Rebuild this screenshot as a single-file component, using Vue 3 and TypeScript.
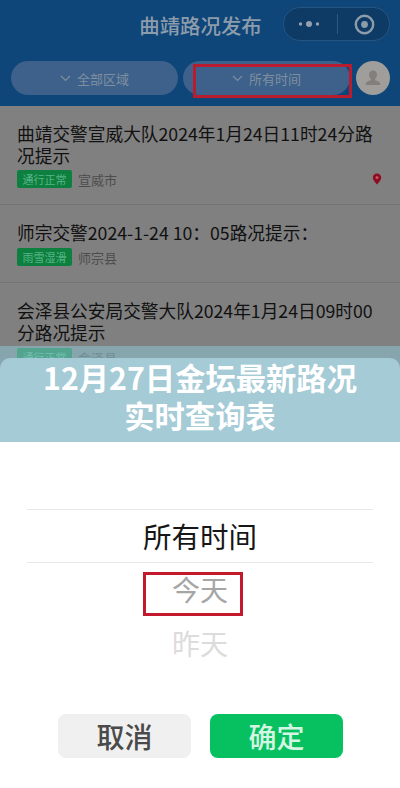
<template>
  <div class="page">
    <section class="screen">
      <header class="top">
        <div class="nav">
          <span class="nav__title">曲靖路况发布</span>
          <div class="capsule">
            <svg class="capsule__dots" width="22" height="8" viewBox="0 0 22 8">
              <circle cx="2.5" cy="4" r="1.7" />
              <circle cx="11" cy="4" r="3" />
              <circle cx="19.5" cy="4" r="1.7" />
            </svg>
            <span class="capsule__line"></span>
            <svg class="capsule__target" width="21" height="21" viewBox="0 0 21 21">
              <circle cx="10.5" cy="10.5" r="8.7" fill="none" stroke="#8d9ca9" stroke-width="2.4" />
              <circle cx="10.5" cy="10.5" r="3.4" fill="#8d9ca9" />
            </svg>
          </div>
        </div>
        <div class="filters">
          <button v-for="item in filters" :key="item" class="pill">
            <svg width="11" height="7" viewBox="0 0 11 7">
              <path d="M1 1l4.5 4.5L10 1" fill="none" stroke="#7f8f9f" stroke-width="1.1" />
            </svg>
            <span>{{ item }}</span>
          </button>
          <div class="avatar">
            <svg width="18" height="18" viewBox="0 0 18 18">
              <path d="M9 1.500c-2.600 0-4 1.900-4 4.300 0 1.700.7 3.200 1.800 4.100v1.300c-1.900.8-4.600 1.400-5 3.300V16h14.400v-1.500c-.4-1.900-3.100-2.500-5-3.300V9.900c1.100-.9 1.800-2.400 1.800-4.100 0-2.400-1.400-4.300-4-4.300z" fill="#827f7c" />
            </svg>
          </div>
          <span class="mark mark--filter"></span>
        </div>
      </header>

      <article v-for="road in roads" :key="road.title" class="road">
        <h3 class="road__title">{{ road.title }}</h3>
        <div class="road__meta">
          <span class="road__tag">{{ road.tag }}</span>
          <span class="road__place">{{ road.place }}</span>
          <svg v-if="road.pin" class="road__pin" width="10" height="12" viewBox="0 0 10 12">
            <path d="M5 .5C2.500.5.800 2.300.800 4.600c0 2.700 2.600 5 4.200 6.900 1.600-1.900 4.200-4.200 4.200-6.900C9.200 2.300 7.500.5 5 .5z" fill="#8f0d22" />
            <circle cx="5" cy="4.600" r="1.500" fill="#c05a68" />
          </svg>
        </div>
      </article>

      <div class="banner">
        <h1 class="banner__panel">12月27日金坛最新路况<br />实时查询表</h1>
      </div>
    </section>

    <section class="sheet">
      <div class="picker">
        <div class="picker__current">所有时间</div>
        <div class="picker__option">
          今天
          <span class="mark mark--option"></span>
        </div>
        <div class="picker__option picker__option--far">昨天</div>
      </div>
      <div class="actions">
        <button class="action action--cancel">取消</button>
        <button class="action action--ok">确定</button>
      </div>
    </section>
  </div>
</template>

<script setup lang="ts">
interface Road {
  title: string
  tag: string
  place: string
  pin?: boolean
}

const filters: string[] = ['全部区域', '所有时间']

const roads: Road[] = [
  {
    title: '曲靖交警宣威大队2024年1月24日11时24分路况提示',
    tag: '通行正常',
    place: '宣威市',
    pin: true
  },
  {
    title: '师宗交警2024-1-24 10：05路况提示：',
    tag: '雨雪湿滑',
    place: '师宗县'
  },
  {
    title: '会泽县公安局交警大队2024年1月24日09时00分路况提示',
    tag: '通行正常',
    place: '会泽县'
  }
]
</script>

<style scoped>
.page {
  width: 400px;
  height: 788px;
  overflow: hidden;
  background: #fff;
  font-family: 'Noto Sans CJK SC', 'Noto Sans', sans-serif;
}
.screen {
  position: relative;
  height: 442px;
  overflow: hidden;
  background: #808080;
}
.top {
  height: 106px;
  box-sizing: border-box;
  padding: 7px 10px 0 11px;
  background: #0f4679;
}
.nav {
  position: relative;
  display: flex;
  justify-content: flex-end;
  height: 34px;
}
.nav__title {
  position: absolute;
  left: 0;
  right: 0;
  top: 0;
  text-align: center;
  color: #8d9cab;
  font-size: 20.4px;
  line-height: 36px;
  font-weight: 500;
}
.capsule {
  position: relative;
  display: flex;
  align-items: center;
  justify-content: space-between;
  box-sizing: border-box;
  width: 107px;
  height: 34px;
  padding: 0 14px;
  border: 1px solid #27557f;
  border-radius: 17px;
  background: #0e3a66;
}
.capsule__dots {
  fill: #93a1ae;
}
.capsule__line {
  width: 1px;
  height: 20px;
  background: #2c5a84;
}
.filters {
  position: relative;
  display: flex;
  margin-top: 20px;
  gap: 5px;
}
.pill {
  display: flex;
  align-items: center;
  justify-content: center;
  gap: 6px;
  width: 167px;
  height: 34px;
  padding: 0;
  border: none;
  border-radius: 17px;
  background: #3d618a;
  color: #7f8f9f;
  font-family: inherit;
  font-size: 13px;
}
.avatar {
  display: flex;
  align-items: center;
  justify-content: center;
  width: 34px;
  height: 34px;
  margin-left: 1px;
  border-radius: 50%;
  background: #a09e9b;
}
.mark {
  position: absolute;
  box-sizing: border-box;
  border: 3px solid #c21a2c;
}
.mark--filter {
  left: 182px;
  top: 3px;
  width: 159px;
  height: 34px;
  border-color: #b91c2f;
}
.road {
  box-sizing: border-box;
  padding: 16px 17px 16px;
  border-bottom: 1px solid #747474;
}
.road__title {
  margin: 0;
  color: #111;
  font-size: 17.7px;
  line-height: 22px;
  font-weight: 400;
}
.road__meta {
  display: flex;
  align-items: center;
  margin-top: 4px;
  height: 18px;
}
.road + .road {
  padding-top: 17px;
}
.road + .road .road__title {
  margin-top: -1px;
}
.road + .road .road__meta {
  margin-top: 5px;
}
.road__tag {
  width: 55px;
  height: 18px;
  border-radius: 2px;
  background: #0d7f3f;
  color: #58b586;
  text-align: center;
  font-size: 11px;
  line-height: 18px;
}
.road__place {
  margin-left: 6px;
  color: #4c4c4c;
  font-size: 13px;
}
.road__pin {
  margin-left: auto;
  margin-right: 1px;
}
.banner {
  position: absolute;
  left: 0;
  right: 0;
  top: 346px;
  bottom: 0;
  padding-top: 12px;
  box-sizing: border-box;
  background: rgba(140, 195, 210, 0.55);
}
.banner__panel {
  height: 84px;
  margin: 0;
  border-radius: 10px 10px 0 0;
  background: #a5cbd6;
  color: #fff;
  text-align: center;
  font-size: 30.3px;
  line-height: 38px;
  font-weight: 700;
}
.sheet {
  padding: 67px 27px 0;
}
.picker {
  display: flex;
  flex-direction: column;
  align-items: center;
}
.picker__current {
  align-self: stretch;
  height: 52px;
  border-top: 1px solid #e8e8e8;
  border-bottom: 1px solid #e8e8e8;
  text-align: center;
  color: #161616;
  font-size: 28.5px;
  line-height: 52px;
}
.picker__option {
  position: relative;
  height: 54px;
  margin-top: 1px;
  color: #a6a6a6;
  font-size: 28px;
  line-height: 50px;
}
.picker__option--far {
  margin-top: 0;
  color: #dcdcdc;
}
.mark--option {
  left: -29px;
  top: 8px;
  width: 100px;
  height: 44px;
}
.actions {
  display: flex;
  gap: 19px;
  margin-top: 42px;
  padding-left: 31px;
}
.action {
  width: 133px;
  height: 44px;
  padding: 0;
  border: none;
  border-radius: 8px;
  font-family: inherit;
  font-size: 28px;
  font-weight: 500;
  line-height: 44px;
}
.action--cancel {
  background: #f0f0f0;
  color: #4a4a4a;
}
.action--ok {
  background: #07c160;
  color: #d3f5e2;
}
</style>
